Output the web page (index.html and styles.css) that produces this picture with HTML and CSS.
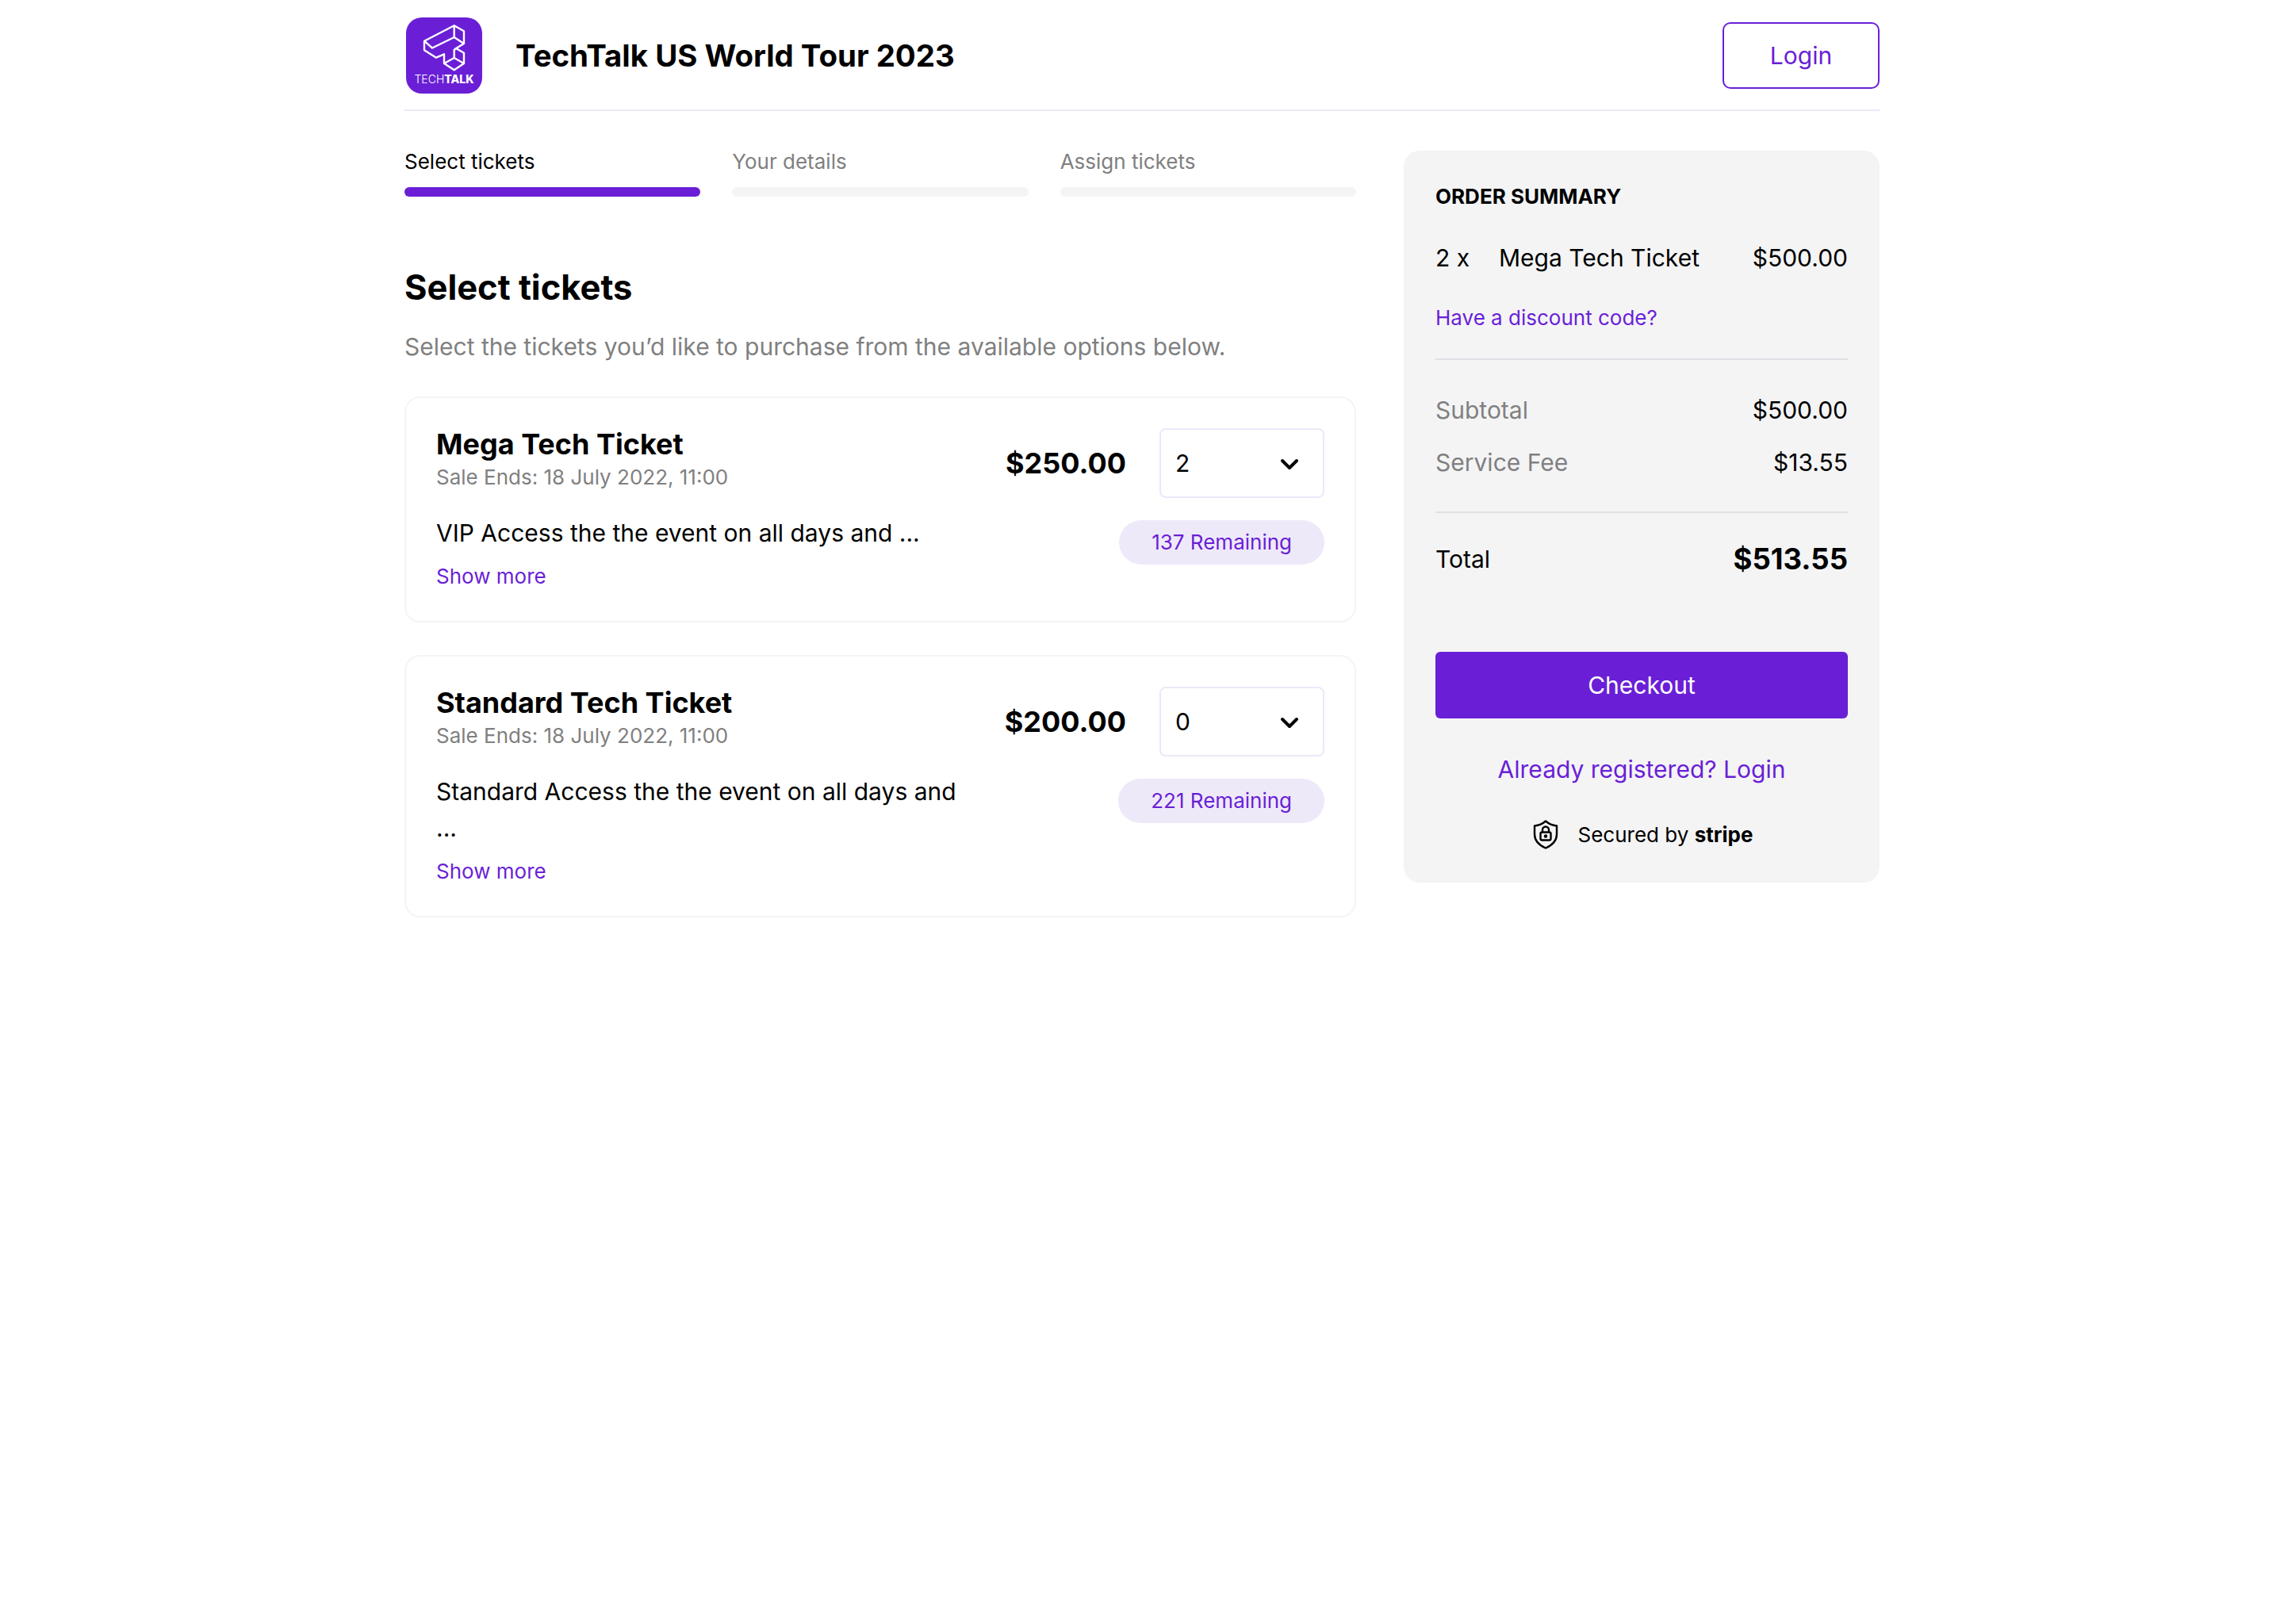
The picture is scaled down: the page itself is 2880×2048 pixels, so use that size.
FILE: index.html
```html
<!DOCTYPE html>
<html lang="en">
<head>
    <meta charset="UTF-8">
    <meta name="viewport" content="width=device-width, initial-scale=1.0">
    <title>TechTalk US World Tour 2023</title>
    <link rel="stylesheet" href="styles.css">
</head>
<body>
    <div class="page">
        <header class="header">
            <div class="brand">
                <div class="logo">
                    <svg class="logo-mark" viewBox="0 0 96 70" fill="none" stroke="#fff" stroke-width="2.400" stroke-linejoin="round">
                        <path d="M60.700 10.300 73 17.300V33L63 39l10 5.700V58L60.700 66.300 48 58V46.300L38 50.700 23 41.300V29.700z"/>
                        <path d="M60.700 10.300V25L73 33M60.700 25 33 38.500 23 29.700M48 58l12.700-7L73 58M60.700 51V41L63 39"/>
                    </svg>
                    <div class="logo-text">TECH<b>TALK</b></div>
                </div>
                <h1 class="event-title">TechTalk US World Tour 2023</h1>
            </div>
            <button class="login-btn">Login</button>
        </header>

        <div class="content">
            <main class="main">
                <div class="steps">
                    <div class="step active"><span>Select tickets</span><div class="step-bar"></div></div>
                    <div class="step"><span>Your details</span><div class="step-bar"></div></div>
                    <div class="step"><span>Assign tickets</span><div class="step-bar"></div></div>
                </div>

                <h2 class="section-title">Select tickets</h2>
                <p class="section-sub">Select the tickets you’d like to purchase from the available options below.</p>

                <div class="ticket">
                    <div class="ticket-top">
                        <div>
                            <div class="ticket-name">Mega Tech Ticket</div>
                            <div class="ticket-date">Sale Ends: 18 July 2022, 11:00</div>
                        </div>
                        <div class="ticket-buy">
                            <div class="ticket-price">$250.00</div>
                            <div class="qty">
                                <span>2</span>
                                <svg class="chevron" viewBox="0 0 24 16" fill="none" stroke="#000" stroke-width="4" stroke-linecap="round" stroke-linejoin="round"><path d="M3 3l9 9 9-9"/></svg>
                            </div>
                        </div>
                    </div>
                    <div class="ticket-bottom">
                        <div class="ticket-desc">
                            <p>VIP Access the the event on all days and ...</p>
                            <a class="show-more" href="#">Show more</a>
                        </div>
                        <div class="remaining">137 Remaining</div>
                    </div>
                </div>

                <div class="ticket">
                    <div class="ticket-top">
                        <div>
                            <div class="ticket-name">Standard Tech Ticket</div>
                            <div class="ticket-date">Sale Ends: 18 July 2022, 11:00</div>
                        </div>
                        <div class="ticket-buy">
                            <div class="ticket-price">$200.00</div>
                            <div class="qty">
                                <span>0</span>
                                <svg class="chevron" viewBox="0 0 24 16" fill="none" stroke="#000" stroke-width="4" stroke-linecap="round" stroke-linejoin="round"><path d="M3 3l9 9 9-9"/></svg>
                            </div>
                        </div>
                    </div>
                    <div class="ticket-bottom">
                        <div class="ticket-desc">
                            <p>Standard Access the the event on all days and ...</p>
                            <a class="show-more" href="#">Show more</a>
                        </div>
                        <div class="remaining">221 Remaining</div>
                    </div>
                </div>
            </main>

            <aside class="summary">
                <h3 class="summary-title">ORDER SUMMARY</h3>
                <div class="summary-item">
                    <span class="item-qty">2 x</span>
                    <span class="item-name">Mega Tech Ticket</span>
                    <span>$500.00</span>
                </div>
                <a class="discount" href="#">Have a discount code?</a>
                <div class="summary-fees">
                    <div class="fee"><span class="fee-label">Subtotal</span><span>$500.00</span></div>
                    <div class="fee"><span class="fee-label">Service Fee</span><span>$13.55</span></div>
                </div>
                <div class="total"><span>Total</span><b>$513.55</b></div>
                <button class="checkout-btn">Checkout</button>
                <a class="registered" href="#">Already registered? Login</a>
                <div class="secured">
                    <svg class="shield" viewBox="0 0 32 37" fill="none" stroke="#000" stroke-width="2.400" stroke-linejoin="round">
                        <path d="M16 1.500C20 5 25 7 30 7.500V18C30 26 24 32 16 35.500 8 32 2 26 2 18V7.500C7 7 12 5 16 1.500z"/>
                        <rect x="9.500" y="15.500" width="13" height="10" rx="2"/>
                        <path d="M12 15.500V12.500a4 4 0 0 1 8 0v3"/>
                        <circle cx="16" cy="20.500" r="1" fill="#000"/>
                    </svg>
                    <span>Secured by <b>stripe</b></span>
                </div>
            </aside>
        </div>
    </div>
</body>
</html>
```

FILE: styles.css
```css
* {
    box-sizing: border-box;
}

body {
    margin: 0;
    background: #fff;
    color: #000;
    font-family: "Inter", "Liberation Sans", sans-serif;
}

.page {
    width: 1860px;
    margin: 0 auto;
}

.header {
    height: 140px;
    padding-top: 2px;
    display: flex;
    justify-content: space-between;
    align-items: center;
    border-bottom: 2px solid #ECE8F8;
}

.brand {
    display: flex;
    align-items: center;
    gap: 42px;
}

.logo {
    width: 96px;
    height: 96px;
    margin-left: 2px;
    border-radius: 20px;
    background: #6A1FD6;
    display: flex;
    flex-direction: column;
    align-items: center;
}

.logo-mark {
    width: 96px;
    height: 70px;
}

.logo-text {
    color: #fff;
    font-size: 14px;
    font-weight: 300;
    line-height: 14px;
    margin-top: 1px;
}

.logo-text b {
    font-weight: 800;
}

.event-title {
    margin: 0;
    font-size: 38.400px;
    font-weight: 700;
}

.login-btn {
    width: 198px;
    height: 84px;
    background: #fff;
    border: 2px solid #6A1FD6;
    border-radius: 10px;
    color: #6A1FD6;
    font-family: inherit;
    font-size: 30px;
}

.content {
    display: flex;
    justify-content: space-between;
    align-items: flex-start;
    padding-top: 50px;
}

.main {
    width: 1200px;
}

.steps {
    display: flex;
    gap: 40px;
    margin-bottom: 87px;
    margin-top: -4px;
    font-size: 26px;
    color: #808080;
}

.step {
    flex: 1;
}

.step span {
    display: block;
    line-height: 36px;
    margin-bottom: 14px;
}

.step-bar {
    height: 12px;
    border-radius: 6px;
    background: #F4F4F5;
}

.step.active {
    color: #000;
}

.step.active .step-bar {
    background: #6A1FD6;
}

.section-title {
    margin: 0 0 28px;
    font-size: 43.500px;
    line-height: 54px;
    font-weight: 700;
}

.section-sub {
    margin: 0 0 43px;
    font-size: 30px;
    line-height: 40px;
    color: #808080;
}

.ticket {
    border: 2px solid #F4F4F5;
    border-radius: 20px;
    padding: 38px;
    margin-bottom: 41px;
}

.ticket-top {
    display: flex;
    justify-content: space-between;
    align-items: flex-start;
}

.ticket-name {
    font-size: 36px;
    line-height: 40px;
    margin-bottom: 4px;
    font-weight: 700;
}

.ticket-date {
    font-size: 26px;
    line-height: 36px;
    color: #808080;
}

.ticket-buy {
    display: flex;
    align-items: center;
    gap: 42px;
}

.ticket-price {
    font-size: 36px;
    font-weight: 700;
}

.qty {
    width: 208px;
    height: 88px;
    border: 2px solid #ECE8F8;
    border-radius: 8px;
    padding: 0 30px 0 18px;
    display: flex;
    justify-content: space-between;
    align-items: center;
    font-size: 30px;
}

.chevron {
    width: 24px;
    height: 16px;
    margin-top: 3px;
}

.ticket-bottom {
    display: flex;
    justify-content: space-between;
    align-items: flex-start;
    margin-top: 21px;
}

.ticket-desc {
    width: 680px;
}

.ticket-desc p {
    margin: 0 0 14px;
    font-size: 30px;
    line-height: 46px;
}

.show-more {
    display: block;
    font-size: 26px;
    line-height: 36px;
    color: #6A1FD6;
    text-decoration: none;
}

.remaining {
    height: 56px;
    margin-top: 7px;
    padding: 0 41px;
    border-radius: 28px;
    background: #EEE9F9;
    color: #6A1FD6;
    font-size: 26px;
    line-height: 56px;
}

.summary {
    width: 600px;
    background: #F4F4F5;
    border-radius: 20px;
    padding: 42px 40px;
    font-size: 30px;
}

.summary-title {
    margin: 0 0 41px;
    font-size: 26px;
    line-height: 32px;
    font-weight: 700;
}

.summary-item {
    display: flex;
    line-height: 40px;
}

.item-qty {
    width: 80px;
}

.item-name {
    flex: 1;
}

.discount {
    display: block;
    margin-top: 38px;
    font-size: 26px;
    line-height: 36px;
    color: #6A1FD6;
    text-decoration: none;
}

.summary-fees {
    margin-top: 33px;
    padding: 43px 0 42px;
    border-top: 2px solid #E1E0E6;
    border-bottom: 2px solid #E1E0E6;
    display: flex;
    flex-direction: column;
    gap: 26px;
}

.fee {
    display: flex;
    justify-content: space-between;
    line-height: 40px;
}

.fee-label {
    color: #808080;
}

.total {
    display: flex;
    justify-content: space-between;
    align-items: center;
    margin-top: 33px;
    line-height: 50px;
}

.total b {
    font-size: 36.500px;
    font-weight: 700;
}

.checkout-btn {
    display: block;
    width: 100%;
    height: 84px;
    margin-top: 92px;
    border: none;
    border-radius: 6px;
    background: #6A1FD6;
    color: #fff;
    font-family: inherit;
    font-size: 30px;
}

.registered {
    display: block;
    margin-top: 44px;
    text-align: center;
    line-height: 40px;
    color: #6A1FD6;
    text-decoration: none;
}

.secured {
    display: flex;
    justify-content: center;
    align-items: center;
    gap: 25px;
    padding-left: 3px;
    margin-top: 44px;
    font-size: 26px;
}

.shield {
    width: 32px;
    height: 37px;
}
```
